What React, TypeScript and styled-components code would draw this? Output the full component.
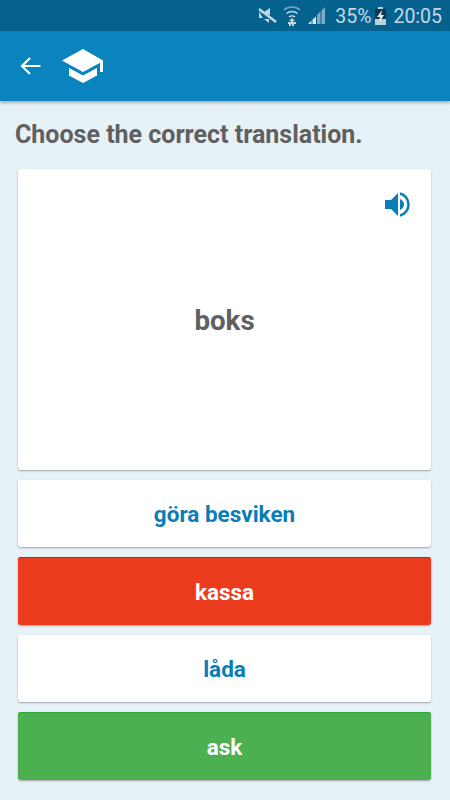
import styled, { createGlobalStyle } from "styled-components";

const GlobalStyle = createGlobalStyle`
  html, body {
    margin: 0;
    padding: 0;
    background: #e6f1f8;
    font-family: Roboto, "Liberation Sans", sans-serif;
  }
`;

const Screen = styled.div`
  width: 450px;
  height: 800px;
  overflow: hidden;
  display: flex;
  flex-direction: column;
  background: #e6f1f8;
`;

const StatusBar = styled.div`
  height: 31px;
  flex: none;
  background: #05628f;
  color: #c3d8e3;
  display: flex;
  align-items: center;
  justify-content: flex-end;
  padding-right: 8px;
  font-size: 19.5px;
  box-sizing: border-box;
`;

const StatusText = styled.span<{ $left?: number }>`
  margin-left: ${(p) => p.$left ?? 0}px;
  line-height: 31px;
  padding-top: 2px;
`;

const StatusIcon = styled.svg<{ $left?: number }>`
  display: block;
  flex: none;
  margin-left: ${(p) => p.$left ?? 0}px;
`;

const AppBar = styled.div`
  height: 70px;
  flex: none;
  background: #0a84bf;
  box-shadow: 0 2px 3px rgba(0, 0, 0, 0.28);
  display: flex;
  align-items: center;
  padding-left: 20px;
  position: relative;
`;

const BackIcon = styled.svg`
  display: block;
  margin-right: 21px;
`;

const Content = styled.div`
  flex: 1;
  display: flex;
  flex-direction: column;
  padding: 20px 19px 0 18px;
`;

const Prompt = styled.div`
  font-size: 25px;
  font-weight: 700;
  line-height: 28px;
  color: #606060;
  margin: 0 0 20px -3px;
  white-space: nowrap;
`;

const Card = styled.div`
  position: relative;
  height: 301px;
  background: #fff;
  border-radius: 3px;
  box-shadow: 0 1px 2px rgba(0, 0, 0, 0.32);
  display: flex;
  align-items: center;
  justify-content: center;
  margin-bottom: 9.6px;
`;

const Word = styled.div`
  font-size: 27.7px;
  font-weight: 700;
  color: #606060;
  padding-top: 2px;
`;

const SpeakerIcon = styled.svg`
  position: absolute;
  top: 23px;
  right: 21px;
`;

const Answers = styled.div`
  display: flex;
  flex-direction: column;
  gap: 10px;
`;

type Tone = "plain" | "wrong" | "right";

const toneColors: Record<Tone, { bg: string; fg: string; edge: string }> = {
  plain: { bg: "#ffffff", fg: "#0a7db8", edge: "#ffffff" },
  wrong: { bg: "#ea3c1d", fg: "#ffffff", edge: "#d8200f" },
  right: { bg: "#4caf50", fg: "#ffffff", edge: "#2fa83a" },
};

const Answer = styled.div<{ $tone: Tone }>`
  box-sizing: border-box;
  height: 67.5px;
  padding-top: 2px;
  border-radius: 3px;
  background: ${(p) => toneColors[p.$tone].bg};
  color: ${(p) => toneColors[p.$tone].fg};
  box-shadow: inset 0 1px 0 ${(p) => toneColors[p.$tone].edge},
    0 1px 2px rgba(0, 0, 0, 0.32);
  display: flex;
  align-items: center;
  justify-content: center;
  font-size: 22.5px;
  font-weight: 700;
`;

const answers: { label: string; tone: Tone }[] = [
  { label: "göra besviken", tone: "plain" },
  { label: "kassa", tone: "wrong" },
  { label: "låda", tone: "plain" },
  { label: "ask", tone: "right" },
];

export default function App() {
  return (
    <Screen>
      <GlobalStyle />
      <StatusBar>
        <StatusIcon $left={0} width="20" height="20" viewBox="0 0 20 20">
          <path d="M1 6h5l6-4v7z M11 13v4l-5-4z M1 6v6h4z" fill="#c3d8e3" />
          <path d="M1 3l17 13" stroke="#c3d8e3" strokeWidth="2.4" />
        </StatusIcon>
        <StatusIcon $left={5} width="18" height="22" viewBox="0 0 18 22">
          <g fill="none" stroke="#c3d8e3" strokeWidth="1.6">
            <path d="M1 5c4-4 12-4 16 0" opacity="0.6" />
            <path d="M3.500 8.500c3-2.600 8-2.600 11 0" />
            <path d="M6 12c1.600-1.300 4.400-1.300 6 0" />
          </g>
          <path d="M9 13l3 3h-2v1h3v2h-2v2H9v-2H8v2H6v-2H5v-2h3v-1H6z" fill="#c3d8e3" />
        </StatusIcon>
        <StatusIcon $left={7} width="17" height="18" viewBox="0 0 17 18">
          <path d="M0 17h3.500v-3.500z M4.500 17H8V9.500l-3.500 3z" fill="#dce8ee" />
          <path d="M9 17h3.500V4.500L9 8z M13.500 17H17V0l-3.500 3.500z" fill="#7fa9c0" />
        </StatusIcon>
        <StatusText $left={10}>35%</StatusText>
        <StatusIcon $left={3} width="13" height="20" viewBox="0 0 13 20">
          <path d="M4 1h5v2h3v16H1V3h3z" fill="#b9cfdb" />
          <path d="M1 3h11v10H1z" fill="#0d3a50" />
          <path d="M8 4L3 11h3l-1 6 5-8H7z" fill="#e6eef2" />
        </StatusIcon>
        <StatusText $left={6}>20:05</StatusText>
      </StatusBar>
      <AppBar>
        <BackIcon width="21" height="20" viewBox="0 0 21 20">
          <path d="M20.500 10H2.500 M10 2l-8 8 8 8" fill="none" stroke="#fff" strokeWidth="2.200" />
        </BackIcon>
        <svg width="42" height="34" viewBox="0 0 42 34">
          <path d="M21 0L0 11.500l21 11.500 17-9.300V23h3V11.500z" fill="#fff" />
          <path d="M7 19v7.500L21 34l14-7.500V19l-14 7.600z" fill="#fff" />
        </svg>
      </AppBar>
      <Content>
        <Prompt>Choose the correct translation.</Prompt>
        <Card>
          <SpeakerIcon width="25" height="25" viewBox="0 0 25 25">
            <path d="M0 8h6l7-7v23l-7-7H0z" fill="#0a7db8" />
            <path d="M15 7c2.500 1 4 3 4 5.500s-1.500 4.500-4 5.500z" fill="#0a7db8" />
            <path d="M15 1.500c5 1.200 8.500 5.700 8.500 11s-3.500 9.800-8.500 11" fill="none" stroke="#0a7db8" strokeWidth="2.500" />
          </SpeakerIcon>
          <Word>boks</Word>
        </Card>
        <Answers>
          {answers.map((a) => (
            <Answer key={a.label} $tone={a.tone}>
              {a.label}
            </Answer>
          ))}
        </Answers>
      </Content>
    </Screen>
  );
}
